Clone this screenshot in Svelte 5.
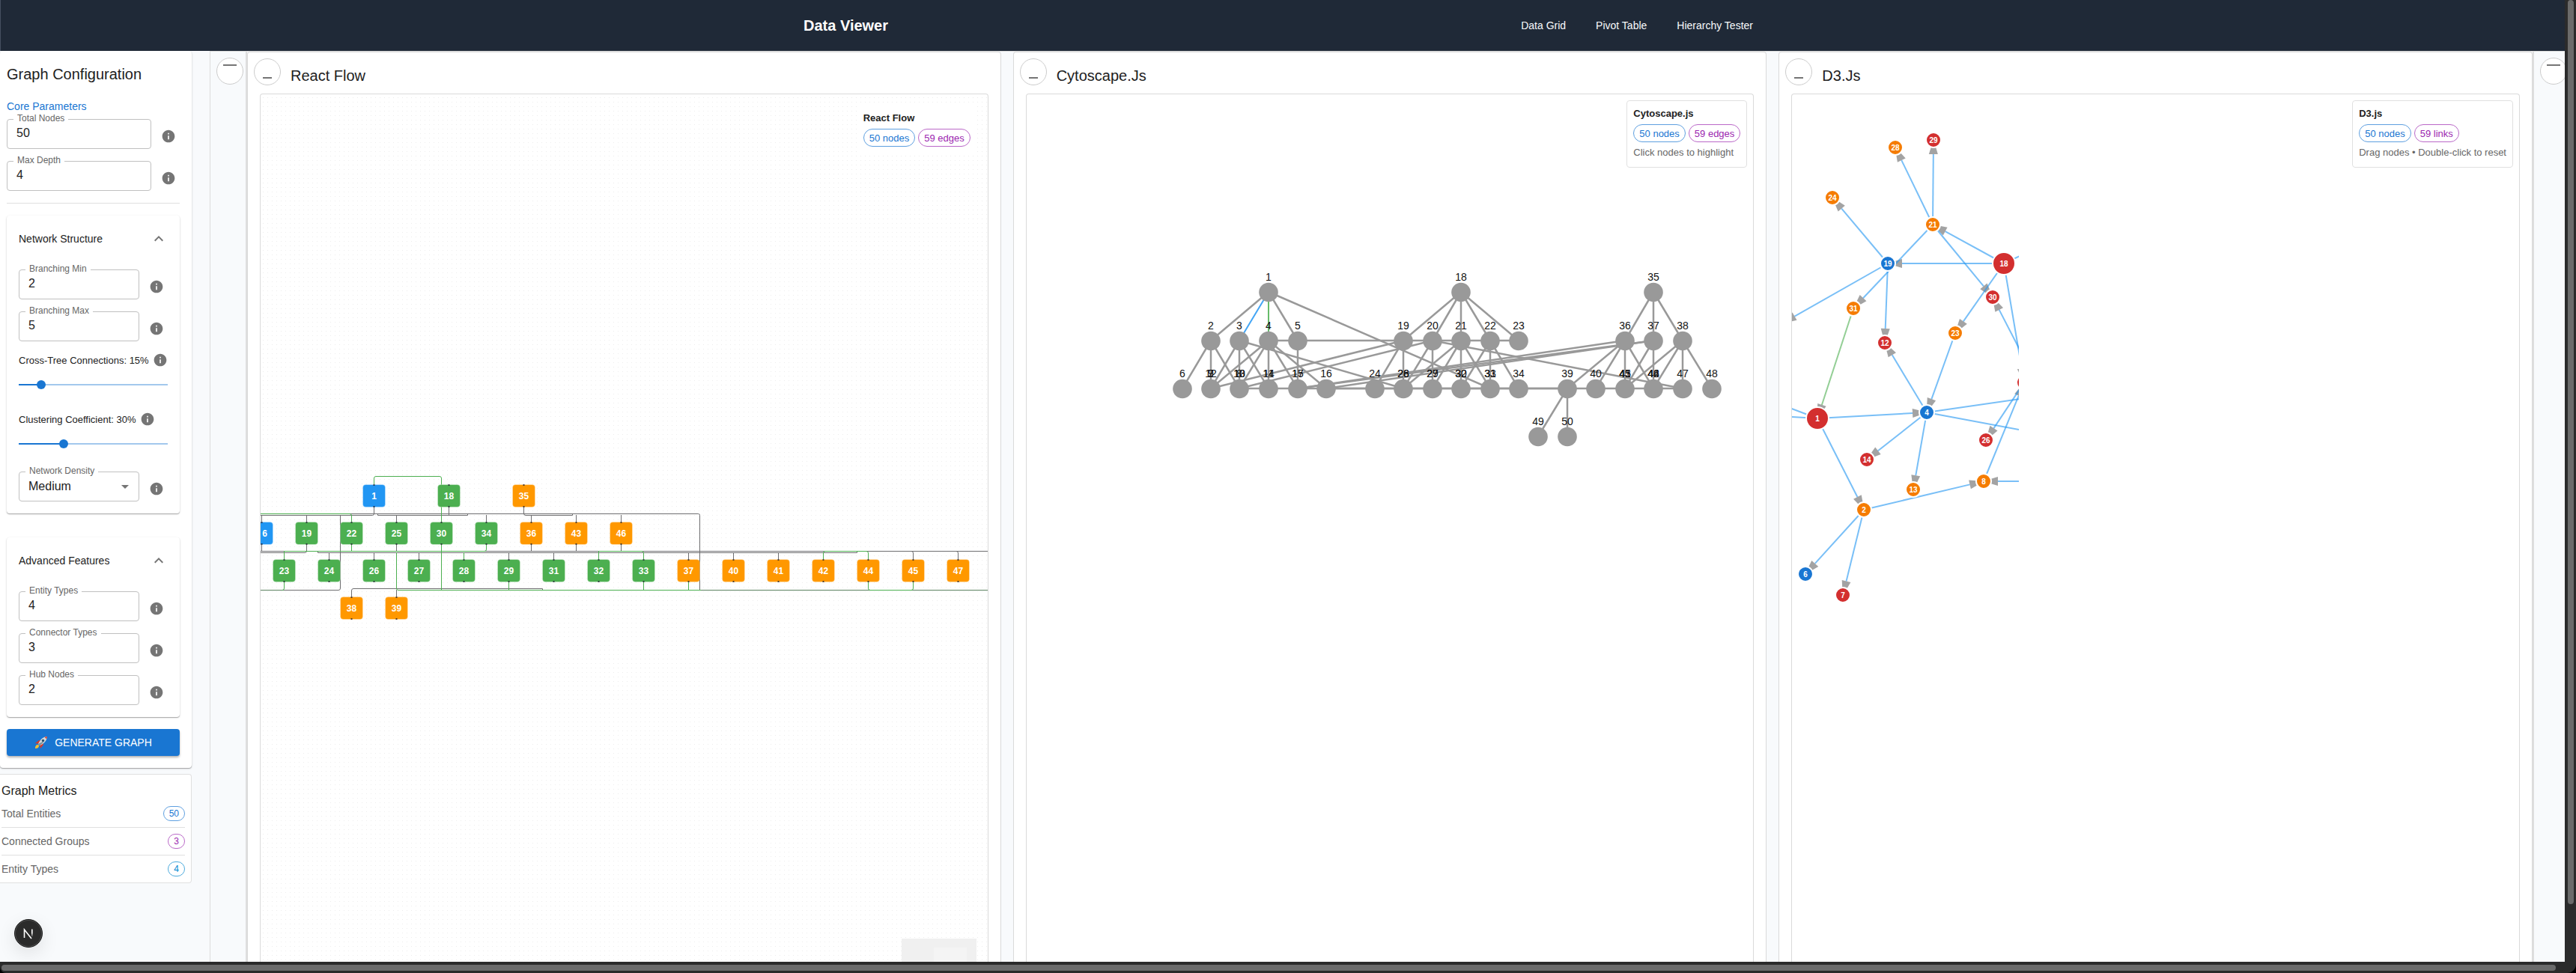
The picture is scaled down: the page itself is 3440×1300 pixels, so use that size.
<script>
  let totalNodes = $state('50');
  let maxDepth = $state('4');
  let branchMin = $state('2');
  let branchMax = $state('5');
  let cross = $state(15);
  let cluster = $state(30);
  let density = $state('Medium');
  let entityTypes = $state('4');
  let connectorTypes = $state('3');
  let hubNodes = $state('2');

  const metrics = [
    { name: 'Total Entities', value: 50, tone: 'blue' },
    { name: 'Connected Groups', value: 3, tone: 'purple' },
    { name: 'Entity Types', value: 4, tone: 'sky' }
  ];

  // React Flow: nodes by row; the last value moves the label of a node that the canvas edge cuts
  const blue = '#2196f3', green = '#4caf50', orange = '#ff9800', gray = '#6e6e70', mixed = '#5b8260';
  const rfNodes = [
    [1, 499, 662, blue], [18, 599, 662, green], [35, 699, 662, orange],
    [6, 349, 712, blue, 4], [19, 409, 712, green], [22, 469, 712, green], [25, 529, 712, green],
    [30, 589, 712, green], [34, 649, 712, green], [36, 709, 712, orange], [43, 769, 712, orange], [46, 829, 712, orange],
    [23, 379, 762, green], [24, 439, 762, green], [26, 499, 762, green], [27, 559, 762, green],
    [28, 619, 762, green], [29, 679, 762, green], [31, 739, 762, green], [32, 799, 762, green],
    [33, 859, 762, green], [37, 919, 762, orange], [40, 979, 762, orange], [41, 1039, 762, orange],
    [42, 1099, 762, orange], [44, 1159, 762, orange], [45, 1219, 762, orange], [47, 1279, 762, orange],
    [38, 469, 812, orange], [39, 529, 812, orange]
  ];
  const rfEdges = [
    ['M340 686.5H932.500Q934.500 686.500 934.500 688.500V788', gray],
    ['M340 688.5H497.500Q499.500 688.500 499.500 686V677', gray],
    ['M504.500 686V688.500H624.500V686M599.500 677V688', gray],
    ['M699.500 677V686Q699.500 688.500 702 688.500H764.500V686', gray],
    ['M349.500 688V697M409.500 688V697M529.500 688V697M649.500 688V697M709.500 688V697M769.500 688V697M829.500 688V697', gray],
    ['M349.500 727V737M409.500 727V736Q409.500 738.500 407 738.500H340M529.500 727V737M709.500 727V737M769.500 727V737M829.500 727V737', gray],
    ['M340 736.5H1330', gray],
    ['M424.500 736V738.500H1144.500V736', gray],
    ['M439.500 738V747M499.500 738V747M559.500 738V747M679.500 738V747M739.500 738V747M919.500 738V747M979.500 738V747M1039.500 738V747M1217 736.500Q1219.500 736.500 1219.500 739V747M1277 736.500Q1279.500 736.500 1279.500 739V747', gray],
    ['M454.500 688V786Q454.500 788.500 452 788.500H340', gray],
    ['M469.500 797V789Q469.500 786.500 472 786.500H724.500V788M529.500 788V797', gray],
    ['M340 686.500H467Q469.500 686.500 469.500 689V697', green],
    ['M499.500 647V639Q499.500 636.500 502 636.500H587Q589.500 636.500 589.500 639V788', green],
    ['M469.500 727V737M379.500 747V736.500H647Q649.500 736.500 649.500 734V727M619.500 738V747', green],
    ['M799.500 747V736.500H857Q859.500 736.500 859.500 739V747M1099.500 747V739Q1099.500 736.500 1102 736.500H1157Q1159.500 736.500 1159.500 739V747', green],
    ['M340 788.500H379M936 788.500H1330', mixed],
    ['M379.500 777V786Q379.500 788.500 377 788.500', green],
    ['M529.500 738V786Q529.500 788.500 532 788.500H936M679.500 777V788M859.500 777V788M919.500 777V788', green],
    ['M1159.500 777V786Q1159.500 788.500 1162 788.500H1217Q1219.500 788.500 1219.500 786V777', green]
  ];

  // Cytoscape: positions on a regular grid
  const cyNodes = {
    a1: [1694, 390, '1'], a18: [1951, 390, '18'], a35: [2208, 390, '35'],
    b2: [1617, 455, '2'], b3: [1655, 455, '3'], b4: [1694, 455, '4'], b5: [1733, 455, '5'],
    b19: [1874, 455, '19'], b20: [1913, 455, '20'], b21: [1951, 455, '21'], b22: [1990, 455, '22'], b23: [2028, 455, '23'],
    b36: [2170, 455, '36'], b37: [2208, 455, '37'], b38: [2247, 455, '38'],
    c6: [1579, 519, '6'], c7: [1617, 519, '7', '9', '12'], c8: [1655, 519, '8', '10', '13'],
    c11: [1694, 519, '11', '14'], c15: [1733, 519, '15', '17'], c16: [1771, 519, '16'],
    c24: [1836, 519, '24'], c26: [1874, 519, '26', '28'], c27: [1913, 519, '27', '29'],
    c30: [1951, 519, '30', '32'], c31: [1990, 519, '31', '33'], c34: [2028, 519, '34'],
    c39: [2093, 519, '39'], c40: [2131, 519, '40'], c41: [2170, 519, '41', '43', '45'],
    c42: [2208, 519, '42', '44', '46'], c47: [2247, 519, '47'], c48: [2286, 519, '48'],
    d49: [2054, 583, '49'], d50: [2093, 583, '50']
  };
  const cyEdges = ('a1-b2 a1-b5 a1-c31 b2-c6 b2-c7 b2-c8 b3-c7 b3-c8 b3-c11 b3-c26 b4-c7 b4-c8 b4-c11 b4-c15 b4-c16 b5-c15 ' +
    'b4-b23 b19-c7 b19-c24 b19-c26 b20-c8 b20-c26 b20-c27 b20-c47 b21-c26 b21-c27 b21-c30 b21-c31 b22-c30 b22-c31 b22-c34 ' +
    'a18-b19 a18-b20 a18-b21 a18-b22 a18-b23 a35-b36 a35-b37 a35-b38 b36-c39 b36-c40 b36-c41 b36-c42 b36-c15 b37-c16 ' +
    'b37-c15 b37-c41 b37-c42 b38-c41 b38-c42 b38-c47 b38-c48 c39-d49 c39-d50 c8-c47 c16-c39')
    .split(' ').map((e) => e.split('-').map((k) => cyNodes[k]));

  // D3: force layout, arrowheads point at the target's centre
  const r = '#d32f2f', o = '#f57c00', b = '#1976d2';
  const d3 = {
    28: [2531, 197, o], 29: [2582, 187, r], 24: [2447, 264, o], 21: [2581, 300, o], 19: [2521, 352, b],
    18: [2676, 352, r, 15], 31: [2475, 412, o], 30: [2661, 397, r], 12: [2517, 458, r], 23: [2611, 445, o],
    4: [2573, 551, b], 1: [2427, 559, r, 15], 14: [2493, 614, r], 13: [2555, 654, o], 26: [2652, 588, r],
    8: [2649, 643, o], 2: [2489, 681, o], 6: [2411, 767, b], 7: [2461, 795, r], x: [2703, 511, r]
  };
  const off = {
    w: [2380, 432], n: [2736, 324], s: [2730, 531], e: [2760, 643],
    e4: [2760, 524], f4: [2760, 586], l1: [2340, 526], m1: [2340, 554]
  };
  const at = (k) => d3[k] ?? off[k];
  const d3Edges = ('21-28 21-29 19-24 18-21 18-19 21-30 18-23 21-31 19-12 19-w 4-12 23-4 1-4 1-2 4-14 4-13 4-e4 4-f4 ' +
    '2-8 2-6 2-7 8-x x-26 e-8 18-n 18-x s-30 1-l1 1-m1 31-1').split(' ').map((e) => {
    const [s, t] = e.split('-');
    const [x1, y1] = at(s), [x2, y2] = at(t);
    const len = Math.hypot(x2 - x1, y2 - y1);
    const ux = (x2 - x1) / len, uy = (y2 - y1) / len;
    const bx = x2 - ux * 19, by = y2 - uy * 19;
    const tx = x2 - ux * 9, ty = y2 - uy * 9;
    return {
      x1, y1, bx, by, color: e === '31-1' ? green : blue,
      head: `${tx - uy * 3},${ty + ux * 3} ${bx - uy * 6},${by + ux * 6} ${bx + uy * 6},${by - ux * 6} ${tx + uy * 3},${ty - ux * 3}`
    };
  });
</script>

{#snippet info(label)}
  <button class="info" type="button" aria-label={'About ' + label}>
    <svg width="20" height="20" viewBox="0 0 24 24"><path fill="#757575" d="M12 2C6.480 2 2 6.480 2 12s4.480 10 10 10 10-4.480 10-10S17.520 2 12 2zm1 15h-2v-6h2v6zm0-8h-2V7h2v2z" /></svg>
  </button>
{/snippet}

{#snippet cardHead(label)}
  <button class="card-head" type="button" aria-expanded="true">
    <span>{label}</span>
    <svg width="24" height="24" viewBox="0 0 24 24"><path fill="#757575" d="m12 8-6 6 1.410 1.410L12 10.830l4.590 4.580L18 14z" /></svg>
  </button>
{/snippet}

{#snippet panelHead(label)}
  <header class="panel-head">
    <button class="round" type="button" aria-label={'Minimize ' + label}><span class="bar low"></span></button>
    <h2>{label}</h2>
  </header>
{/snippet}

<div class="window">
  <div class="page">
    <header class="top">
      <div class="top-in">
        <strong>Data Viewer</strong>
        <nav><a href="#grid">Data Grid</a><a href="#pivot">Pivot Table</a><a href="#tester">Hierarchy Tester</a></nav>
      </div>
    </header>
    <main>
      <aside>
        <section class="paper config">
          <h1>Graph Configuration</h1>
          <h3>Core Parameters</h3>
          <div class="stack">
            <div class="row"><div class="field"><label for="tn">Total Nodes</label><input id="tn" bind:value={totalNodes} /></div>{@render info('total nodes')}</div>
            <div class="row"><div class="field"><label for="md">Max Depth</label><input id="md" bind:value={maxDepth} /></div>{@render info('max depth')}</div>
          </div>
          <hr />
          <section class="paper card">
            {@render cardHead('Network Structure')}
            <div class="stack">
              <div class="row"><div class="field"><label for="bmin">Branching Min</label><input id="bmin" bind:value={branchMin} /></div>{@render info('branching min')}</div>
              <div class="row"><div class="field"><label for="bmax">Branching Max</label><input id="bmax" bind:value={branchMax} /></div>{@render info('branching max')}</div>
            </div>
            <div class="sliders">
              <div>
                <div class="slabel"><label for="cross">Cross-Tree Connections: {cross}%</label>{@render info('cross-tree connections')}</div>
                <input class="range" id="cross" type="range" min="0" max="100" bind:value={cross} style="--v:{cross / 100}" />
              </div>
              <div>
                <div class="slabel"><label for="clus">Clustering Coefficient: {cluster}%</label>{@render info('clustering coefficient')}</div>
                <input class="range" id="clus" type="range" min="0" max="100" bind:value={cluster} style="--v:{cluster / 100}" />
              </div>
            </div>
            <div class="row">
              <div class="field">
                <label for="dens">Network Density</label>
                <select id="dens" bind:value={density}><option>Low</option><option>Medium</option><option>High</option></select>
                <svg class="caret" width="24" height="24" viewBox="0 0 24 24"><path fill="#757575" d="m7 10 5 5 5-5z" /></svg>
              </div>
              {@render info('network density')}
            </div>
          </section>
          <section class="paper card second">
            {@render cardHead('Advanced Features')}
            <div class="stack">
              <div class="row"><div class="field"><label for="et">Entity Types</label><input id="et" bind:value={entityTypes} /></div>{@render info('entity types')}</div>
              <div class="row"><div class="field"><label for="ct">Connector Types</label><input id="ct" bind:value={connectorTypes} /></div>{@render info('connector types')}</div>
              <div class="row"><div class="field"><label for="hn">Hub Nodes</label><input id="hn" bind:value={hubNodes} /></div>{@render info('hub nodes')}</div>
            </div>
          </section>
          <button class="generate" type="button">
            <svg width="18" height="18" viewBox="0 0 18 18">
              <path d="M1 10 6 6l4 1-4 4zM8 17l4-5-1-3-4 3z" fill="#d23b2e" />
              <path d="M1 17c0-3 1-5 4-5l1 1c0 3-2 4-5 4z" fill="#fbc02d" />
              <path d="M5 11C7 6 11 1.500 17 1c-.500 6-5 10-10 12z" fill="#cfd8dc" />
              <path d="M13.500 1.800 17 1l-.800 3.500z" fill="#d23b2e" />
              <path d="m5 11 2 2 5-4-1-1z" fill="#78909c" />
              <circle cx="11.500" cy="6.500" r="1.700" fill="#29506d" />
            </svg>
            <span>GENERATE GRAPH</span>
          </button>
        </section>
        <section class="metrics">
          <h4>Graph Metrics</h4>
          <dl>
            {#each metrics as m}
              <div><dt>{m.name}</dt><dd class={'chip small ' + m.tone}>{m.value}</dd></div>
            {/each}
          </dl>
        </section>
        <button class="dev" type="button" aria-label="Developer tools">
          <svg width="38" height="38" viewBox="0 0 38 38">
            <defs><linearGradient id="fade" x1="0" y1="0" x2="0" y2="1"><stop offset=".5" stop-color="#fff" /><stop offset="1" stop-color="#fff" stop-opacity=".1" /></linearGradient></defs>
            <circle cx="19" cy="19" r="18.500" fill="#2b2b2b" stroke="#1a1a1a" /><circle cx="19" cy="19" r="17.500" fill="none" stroke="#4c4c4c" />
            <path d="M13.500 25V14L23 26" fill="none" stroke="#fff" stroke-width="1.600" /><rect x="23" y="13.500" width="1.600" height="10" fill="url(#fade)" />
          </svg>
        </button>
      </aside>

      <div class="rail"><button class="round" type="button" aria-label="Collapse configuration"><span class="bar"></span></button></div>

      <div class="panels">
        <section class="panel">
          {@render panelHead('React Flow')}
          <div class="canvas">
            <svg width="971" height="1180" viewBox="348 126 971 1180">
              <defs>
                <pattern id="dots" x="1" y="2" width="6" height="6" patternUnits="userSpaceOnUse"><rect x="2" y="2" width="1" height="1" fill="#ededed" /></pattern>
              </defs>
              <rect x="348" y="126" width="971" height="1180" fill="url(#dots)" />
              {#each rfEdges as [d, c]}<path {d} fill="none" stroke={c} />{/each}
              {#each rfNodes as [id, x, y, c, shift = 0]}
                <rect x={x - 14.5} y={y - 14.5} width="30" height="30" rx="4" fill={c} stroke="#fff" stroke-opacity=".3" />
                <rect class="handle" x={x - 0.5} y={y - 15} width="2" height="2" />
                <rect class="handle" x={x - 0.5} y={y + 14} width="2" height="2" />
                <text class="rf" x={x + 0.5 + shift} y={y + 4.5}>{id}</text>
              {/each}
            </svg>
            <div class="legend plain">
              <b>React Flow</b>
              <div class="chips"><span class="chip blue">50 nodes</span><span class="chip purple">59 edges</span></div>
            </div>
            <div class="minimap"><div></div></div>
          </div>
        </section>

        <section class="panel">
          {@render panelHead('Cytoscape.Js')}
          <div class="canvas">
            <svg width="970" height="1180" viewBox="1371 126 970 1180">
              {#each cyEdges as [s, t]}<line x1={s[0]} y1={s[1]} x2={t[0]} y2={t[1]} stroke="#999" stroke-width="2.500" />{/each}
              <line x1="1694" y1="390" x2="1655" y2="455" stroke="#42a5f5" stroke-width="2" />
              <line x1="1694" y1="390" x2="1694" y2="455" stroke="#66bb6a" stroke-width="2" />
              {#each Object.values(cyNodes) as [x, y, ...names]}
                <circle cx={x} cy={y + 0.5} r="12.8" fill="#999" />
                {#each names as n}<text class="cy" {x} y={y - 15}>{n}</text>{/each}
              {/each}
            </svg>
            <div class="legend">
              <b>Cytoscape.js</b>
              <div class="chips"><span class="chip blue">50 nodes</span><span class="chip purple">59 edges</span></div>
              <small>Click nodes to highlight</small>
            </div>
          </div>
        </section>

        <section class="panel">
          {@render panelHead('D3.Js')}
          <div class="canvas">
            <svg class="clip" width="303" height="1180" viewBox="2393 126 303 1180">
              {#each d3Edges as e}
                <g opacity=".6"><line x1={e.x1} y1={e.y1} x2={e.bx} y2={e.by} stroke={e.color} stroke-width="2" /></g>
                <polygon points={e.head} fill="#666" opacity=".6" />
              {/each}
              {#each Object.entries(d3) as [id, [x, y, c, rad = 10]]}
                <circle cx={x} cy={y} r={rad} fill={c} stroke="#fff" stroke-width="2" />
                {#if id !== 'x'}<text class="d3" {x} y={y + 4}>{id}</text>{/if}
              {/each}
            </svg>
            <div class="legend">
              <b>D3.js</b>
              <div class="chips"><span class="chip blue">50 nodes</span><span class="chip purple">59 links</span></div>
              <small>Drag nodes • Double-click to reset</small>
            </div>
          </div>
        </section>
      </div>

      <div class="rail end"><button class="round" type="button" aria-label="Collapse details"><span class="bar"></span></button></div>
    </main>
  </div>
  <div class="scroll vert"><i></i></div>
  <div class="scroll horz"><i></i></div>
  <div class="corner"></div>
</div>

<style>
  :global(body) { background: #000; }
  * { box-sizing: border-box; }
  button, input, select { font: inherit; color: inherit; }
  button { padding: 0; border: 0; background: none; cursor: pointer; }
  h1, h2, h3, h4, dl, dd { margin: 0; font-weight: 400; }
  .window {
    display: grid; grid-template: 1fr 15px / 1fr 15px; height: 100vh; overflow: hidden;
    font-family: "Liberation Sans", Arial, sans-serif; color: #212121;
  }
  .page { min-width: 0; min-height: 0; display: flex; flex-direction: column; overflow: hidden; background: #f8fafc; }
  .top { flex: none; height: 68px; background: #1f2937; color: #f8fafc; border-left: 1px solid #465060; }
  .top-in { max-width: 1280px; height: 100%; margin: 0 auto; display: flex; align-items: center; justify-content: space-between; }
  .top strong { font-size: 20px; color: #fff; }
  nav { display: flex; gap: 16px; }
  nav a { padding: 0 12px; font-size: 14px; color: inherit; text-decoration: none; }
  main { flex: 1; min-height: 0; display: flex; overflow: hidden; }

  aside { flex: none; width: 280px; position: relative; }
  .paper { background: #fff; border-radius: 4px; box-shadow: 0 1px 3px rgba(0,0,0,.14), 0 1px 1px rgba(0,0,0,.14), 0 1px 1px rgba(0,0,0,.14); }
  .config { width: 256px; padding: 16px 16px 16px 9px; }
  h1 { font-size: 20px; line-height: 30px; }
  h3 { margin: 17px 0 6px; font-size: 14px; line-height: 22px; color: #1976d2; }
  .stack { display: flex; flex-direction: column; gap: 16px; }
  .row { display: flex; align-items: flex-start; gap: 8px; }
  .field { flex: 1; min-width: 0; position: relative; height: 40px; border: 1px solid #c0c0c0; border-radius: 4px; }
  .field label { position: absolute; top: -9px; left: 8px; padding: 0 5px; background: #fff; font-size: 12px; line-height: 14px; color: #666; }
  .field input, .field select { width: 100%; height: 36px; padding: 0 12px; border: 0; outline: 0; background: none; font-size: 16px; appearance: none; }
  .caret { position: absolute; right: 6px; top: 7px; pointer-events: none; }
  .info { flex: none; width: 30px; height: 30px; margin-top: 8px; display: grid; place-items: center; }
  hr { margin: 16px 0; border: 0; border-top: 1px solid #e0e0e0; }
  .card { padding: 0 16px 16px; }
  .second { margin: 32px 0 16px; }
  .card-head { width: 100%; height: 62px; margin-bottom: 10px; display: flex; align-items: center; justify-content: space-between; font-size: 14px; }
  .sliders { display: grid; grid-template-columns: minmax(0, 1fr); gap: 13px; margin: 10px 0 19px; }
  .slabel { display: flex; align-items: center; height: 30px; font-size: 13px; white-space: nowrap; }
  .slabel .info { margin-top: 0; }
  .range {
    display: block; width: calc(100% + 12px); height: 36px; margin: 0 -6px; appearance: none;
    background:
      linear-gradient(#1976d2, #1976d2) 6px center / calc((100% - 12px) * var(--v)) 2px no-repeat,
      linear-gradient(#a3c8ed, #a3c8ed) 6px center / calc(100% - 12px) 2px no-repeat;
  }
  .range::-webkit-slider-thumb { appearance: none; width: 12px; height: 12px; border-radius: 50%; background: #1976d2; }
  .generate { width: 100%; height: 36px; display: flex; align-items: center; justify-content: center; gap: 9px; border-radius: 4px; background: #1976d2; color: #fff; font-size: 14px; box-shadow: 0 2px 3px rgba(0,0,0,.3); }
  .metrics { width: 256px; margin-top: 8px; padding: 10px 8px 0 2px; background: #fff; border: 1px solid #e0e0e0; border-left: 0; border-radius: 0 4px 4px 0; }
  h4 { font-size: 16px; line-height: 24px; }
  dl div { display: flex; align-items: center; justify-content: space-between; height: 37px; border-bottom: 1px solid #e0e0e0; }
  dl div:last-child { height: 36px; border: 0; }
  dt { font-size: 14px; color: #666; }
  .dev { position: absolute; left: 19px; bottom: 19px; height: 38px; border-radius: 50%; box-shadow: 0 8px 24px rgba(0,0,0,.1); }

  .chip { display: inline-flex; align-items: center; height: 24px; padding: 0 7px; border: 1px solid; border-radius: 12px; font-size: 13px; }
  .chip.small { height: 20px; font-size: 12px; }
  .blue { color: #1976d2; border-color: #5e9fe0; }
  .purple { color: #9c27b0; border-color: #ba68c8; }
  .sky { color: #0288d1; border-color: #4dabdd; }

  .rail { flex: none; width: 48px; border: 1px solid #dcdcdc; border-width: 1px 0 0 1px; padding: 8px; }
  .end { width: 41px; border-left: 0; overflow: hidden; }
  .round { flex: none; width: 36px; height: 36px; display: grid; place-items: center; border: 1px solid #ccc; border-radius: 50%; background: #fff; }
  .bar { width: 18px; height: 2px; margin-bottom: 16px; background: #757575; }
  .low { width: 12px; margin: 16px 0 0; }
  .panels { flex: 1; min-width: 0; display: grid; grid-template-columns: repeat(3, minmax(0, 1fr)); gap: 16px; border: 2px solid #dedede; border-width: 1px 2px 0; }
  .panel { display: flex; flex-direction: column; background: #fff; border: 1px solid #dadada; border-bottom: 0; border-radius: 4px 4px 0 0; padding: 0 16px; }
  .panel-head { flex: none; height: 55px; margin-left: -8px; padding-top: 8px; display: flex; gap: 13px; }
  h2 { padding-top: 7px; font-size: 20px; line-height: 32px; }
  .canvas { flex: 1; min-height: 0; position: relative; overflow: hidden; border: 1px solid #dadada; border-bottom: 0; border-radius: 4px 4px 0 0; }
  .canvas > svg { position: absolute; left: 0; top: 0; }
  .clip { overflow: hidden; }
  text { text-anchor: middle; }
  .handle { fill: #1a192b; fill-opacity: .75; }
  .rf { font-size: 12px; font-weight: 700; fill: #fff; }
  .cy { font-size: 14px; fill: #111; }
  .d3 { font-size: 10px; font-weight: 700; fill: #fff; }
  .legend { position: absolute; top: 8px; right: 8px; height: 90px; padding: 7px 8px; background: #fff; border: 1px solid #e0e0e0; border-radius: 4px; font-size: 13px; }
  .legend b { display: block; line-height: 20px; margin-bottom: 4px; }
  .legend small { display: block; margin-top: 4px; font-size: 13px; line-height: 20px; color: #666; }
  .plain { top: 14px; right: 14px; height: 66px; border-color: transparent; }
  .chips { display: flex; gap: 4px; }
  .minimap { position: absolute; right: 15px; bottom: -44px; width: 100px; height: 75px; background: #f0f0f0; padding: 12px 13px 12px 43px; }
  .minimap div { height: 100%; background: #f4f4f4; }

  .scroll { background: #2b2b2b; }
  .scroll i { display: block; background: #6b6b6b; border-radius: 4px; }
  .vert { padding: 0 3px 0 4px; }
  .vert i { width: 8px; height: 94%; }
  .horz { grid-row: 2; padding: 4px 12px 3px 2px; border-bottom-left-radius: 8px; }
  .horz i { height: 8px; }
  .corner { grid-row: 2; background: #2b2b2b; border-bottom-right-radius: 12px; }
</style>
